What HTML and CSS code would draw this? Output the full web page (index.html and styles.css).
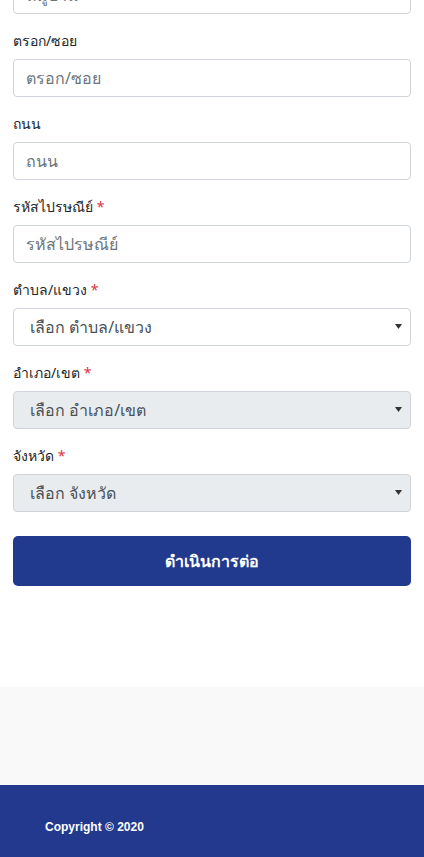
FILE: index.html
```html
<!DOCTYPE html>
<html lang="th">
<head>
<meta charset="utf-8">
<title>ที่อยู่</title>
<link rel="stylesheet" href="styles.css">
</head>
<body>
<main class="content">
  <form class="address-form">
    <div class="group">
      <label class="label">หมู่บ้าน</label>
      <input class="field" type="text" placeholder="หมู่บ้าน">
    </div>
    <div class="group">
      <label class="label">ตรอก/ซอย</label>
      <input class="field" type="text" placeholder="ตรอก/ซอย">
    </div>
    <div class="group">
      <label class="label">ถนน</label>
      <input class="field" type="text" placeholder="ถนน">
    </div>
    <div class="group">
      <label class="label">รหัสไปรษณีย์ <span class="req">*</span></label>
      <input class="field" type="text" placeholder="รหัสไปรษณีย์">
    </div>
    <div class="group">
      <label class="label">ตำบล/แขวง <span class="req">*</span></label>
      <div class="select-wrap">
        <select class="field select"><option>เลือก ตำบล/แขวง</option></select>
        <svg class="caret" width="7" height="5" viewBox="0 0 7 5"><path d="M0 0h7L3.5 5z" fill="#333"/></svg>
      </div>
    </div>
    <div class="group">
      <label class="label">อำเภอ/เขต <span class="req">*</span></label>
      <div class="select-wrap">
        <select class="field select" disabled><option>เลือก อำเภอ/เขต</option></select>
        <svg class="caret" width="7" height="5" viewBox="0 0 7 5"><path d="M0 0h7L3.5 5z" fill="#333"/></svg>
      </div>
    </div>
    <div class="group">
      <label class="label">จังหวัด <span class="req">*</span></label>
      <div class="select-wrap">
        <select class="field select" disabled><option>เลือก จังหวัด</option></select>
        <svg class="caret" width="7" height="5" viewBox="0 0 7 5"><path d="M0 0h7L3.5 5z" fill="#333"/></svg>
      </div>
    </div>
    <button class="submit" type="button">ดำเนินการต่อ</button>
  </form>
</main>
<section class="spacer"></section>
<footer class="footer">
  <p class="copyright">Copyright © 2020</p>
</footer>
</body>
</html>
```
FILE: styles.css
```css
* { box-sizing: border-box; }
html, body { margin: 0; padding: 0; }
body {
  font-family: "Noto Sans", "DejaVu Sans", sans-serif;
  color: #212529;
  background: #fff;
}
.content {
  padding: 0 13px 101px;
  margin-top: -53px;
}
.address-form {
  display: flex;
  flex-direction: column;
}
.group {
  display: flex;
  flex-direction: column;
  margin-bottom: 16px;
}
.label {
  font-size: 14px;
  line-height: 21px;
  margin-bottom: 8px;
  color: #212529;
}
.req { color: #dc3545; }
.field {
  height: 38px;
  width: 100%;
  border: 1px solid #ced4da;
  border-radius: 4px;
  padding: 0 12px;
  font-family: inherit;
  font-size: 16px;
  color: #495057;
  background: #fff;
  outline: none;
}
.field::placeholder { color: #6c757d; }
.select-wrap { position: relative; }
.select {
  appearance: none;
  -webkit-appearance: none;
  padding-left: 16px;
  color: #495057;
}
.select:disabled {
  background: #e9ecef;
  opacity: 1;
  color: #495057;
}
.caret {
  position: absolute;
  right: 9px;
  top: 16px;
  pointer-events: none;
}
.submit {
  margin-top: 8px;
  height: 50px;
  border: 0;
  border-radius: 5px;
  background: #223a8e;
  color: #fff;
  font-family: inherit;
  font-size: 16px;
  font-weight: 700;
}
.spacer {
  height: 98px;
  background: #f9f9f9;
}
.footer {
  height: 72px;
  background: #22398e;
  padding: 0 45px;
  display: flex;
  align-items: center;
}
.copyright {
  margin: 12px 0 0;
  color: #fff;
  font-family: "Liberation Sans", sans-serif;
  font-size: 12px;
  font-weight: 700;
}
```
